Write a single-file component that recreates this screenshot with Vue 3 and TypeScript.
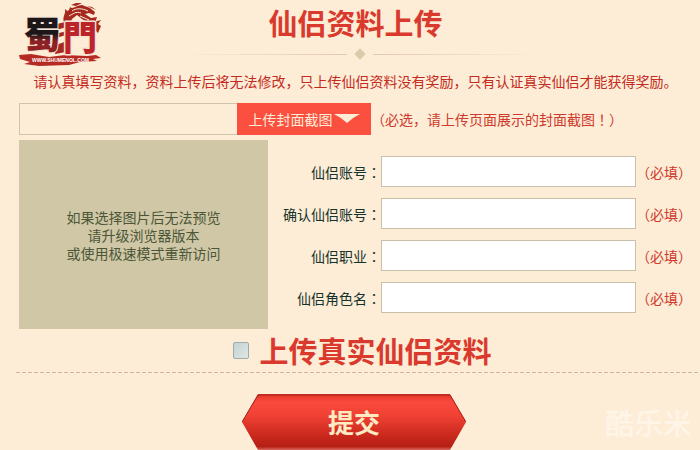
<script setup lang="ts">
import { reactive, ref } from 'vue'

interface Field {
  id: string
  label: string
}

const fields: Field[] = [
  { id: 'account', label: '仙侣账号' },
  { id: 'account-confirm', label: '确认仙侣账号' },
  { id: 'profession', label: '仙侣职业' },
  { id: 'role-name', label: '仙侣角色名' },
]

const values = reactive<Record<string, string>>({
  account: '',
  'account-confirm': '',
  profession: '',
  'role-name': '',
})

const previewLines: string[] = ['如果选择图片后无法预览', '请升级浏览器版本', '或使用极速模式重新访问']

const coverName = ref('')
const withRealInfo = ref(false)
</script>

<template>
  <main class="page">
    <header class="header">
      <svg class="logo" viewBox="0 0 84 66" role="img" aria-label="蜀門">
        <defs>
          <linearGradient id="logo-ink" x1="0" y1="0" x2="0" y2="1">
            <stop offset="0.52" stop-color="#1d1618" />
            <stop offset="0.66" stop-color="#8f2024" />
          </linearGradient>
        </defs>
        <g fill="#a5291f">
          <path d="M45 20 C43 15 47 12 46 7 C49 10 50 9 51 5 C54 8 57 3 63 3 L71 6 L76 10 L75 13 L70 11 L66 12 L72 16 L78 15 L76 21 L68 20 L63 17 L58 13 L53 17 L51 22 L46 26 Z" />
          <path d="M52 3 L57 1 L63 1 L57 4 Z M68 4 L73 5 L77 8 Z M75 20 L82 18 L79 22 L82 24 L79 31 L76 28 Z" />
          <path d="M34 23 L50 19 L48 25 L37 28 Z M36 32 L48 29 L47 33 L37 36 Z M37 43 L48 39 L47 50 L36 52 Z" />
        </g>
        <path d="M53 9 C57 6 63 6 69 9 M50 14 C54 12 57 9 62 11 M61 14 L70 18" fill="none" stroke="#fdedd7" stroke-width="1" />
        <path d="M0 53 L12 52 L30 55 L46 53 L68 54 L77 53 L82 56 L74 57 L78 59 L61 60 L50 63 L20 64 L5 62 L11 60 L1 57 Z" fill="#b52b24" />
        <text class="logo-glyph ink" x="5" y="47">蜀</text>
        <text class="logo-glyph red" x="44" y="48">門</text>
        <text class="logo-url" x="13" y="60">WWW.SHUMENOL.COM</text>
      </svg>
      <div class="heading">
        <h1 class="title">仙侣资料上传</h1>
        <div class="ornament"><span class="rule left"></span><span class="diamond"></span><span class="rule right"></span></div>
      </div>
    </header>

    <p class="notice">请认真填写资料，资料上传后将无法修改，只上传仙侣资料没有奖励，只有认证真实仙侣才能获得奖励。</p>

    <form @submit.prevent>
      <div class="upload">
        <input v-model="coverName" class="file-name" type="text" aria-label="封面截图" readonly />
        <button class="browse" type="button">
          上传封面截图
          <svg class="arrow" viewBox="0 0 26 10" aria-hidden="true"><path d="M0 0 H26 Q18 4 13 9 Q8 4 0 0 Z" fill="#fdedd7" /></svg>
        </button>
        <span class="required">（必选，请上传页面展示的封面截图<span class="mark">！</span>）</span>
      </div>

      <div class="details">
        <div class="preview">
          <span v-for="line in previewLines" :key="line">{{ line }}</span>
        </div>
        <div class="fields">
          <div v-for="field in fields" :key="field.id" class="field">
            <label :for="field.id">{{ field.label }}<span class="mark">：</span></label>
            <input :id="field.id" v-model="values[field.id]" type="text" required />
            <span class="required">（必填）</span>
          </div>
        </div>
      </div>

      <label class="real-info">
        <input v-model="withRealInfo" type="checkbox" />
        <span class="title">上传真实仙侣资料</span>
      </label>

      <footer class="footer">
        <button class="submit" type="submit">
          <svg class="submit-shape" viewBox="0 0 224 56" preserveAspectRatio="none" aria-hidden="true">
            <defs>
              <linearGradient id="submit-fill" x1="0" y1="0" x2="0" y2="1">
                <stop offset="0" stop-color="#df3529" />
                <stop offset="0.15" stop-color="#fb4a3d" />
                <stop offset="0.4" stop-color="#ef4034" />
                <stop offset="0.75" stop-color="#c9281d" />
                <stop offset="0.94" stop-color="#b51f14" />
                <stop offset="1" stop-color="#d8695c" />
              </linearGradient>
            </defs>
            <path d="M16 0 H208 L224 28 L208 56 H16 L0 28 Z" fill="url(#submit-fill)" />
            <path d="M0 28 L16 1 H208 L224 28" fill="none" stroke="#a52118" stroke-width="1" />
          </svg>
          <span class="submit-text">提交</span>
        </button>
        <span class="watermark">酷乐米</span>
      </footer>
    </form>
  </main>
</template>

<style>
body {
  margin: 0;
  background: #fdedd7;
}
</style>

<style scoped>
.page {
  box-sizing: border-box;
  padding: 0 8px 0 19px;
  overflow: hidden;
  background: #fdedd7;
  color: #16332b;
  font-family: "Noto Sans CJK SC", sans-serif;
  font-size: 14px;
  line-height: 18px;
}

input,
button {
  box-sizing: border-box;
  margin: 0;
  padding: 0;
  border: 0;
  border-radius: 0;
  font: inherit;
}

/* Punctuation centred in its cell */
.mark {
  font-family: "Noto Sans CJK TC", sans-serif;
}

.header {
  display: grid;
  grid-template-columns: 1fr 376px 1fr;
  align-items: start;
}

.logo {
  width: 84px;
  height: 66px;
  padding-top: 2px;
}

.logo-glyph {
  font-family: "Noto Sans CJK TC", sans-serif;
  font-weight: 900;
  paint-order: stroke;
  stroke-linejoin: round;
}

.logo-glyph.ink {
  font-size: 37px;
  fill: url(#logo-ink);
  stroke: #f3e2d6;
  stroke-width: 2px;
}

.logo-glyph.red {
  font-size: 34px;
  fill: #bd2429;
  stroke: #f3e2d6;
  stroke-width: 3px;
}

.logo-url {
  fill: #ffffff;
  font-family: "Liberation Sans", sans-serif;
  font-size: 5px;
  font-weight: 700;
}

.heading {
  padding-top: 3px;
}

.title {
  margin: 0;
  color: #d93a2d;
  font-size: 29px;
  font-weight: 700;
  line-height: 38px;
  text-align: center;
}

.ornament {
  display: flex;
  align-items: center;
  justify-content: center;
  gap: 9px;
  height: 26px;
  padding-left: 8px;
}

.rule {
  flex: 1;
  height: 1px;
}

.rule.left {
  background: linear-gradient(to left, #e3c8b0, #fdedd7);
}

.rule.right {
  background: linear-gradient(to right, #e3c8b0, #fdedd7);
}

.diamond {
  width: 8px;
  height: 8px;
  background: #d8cca9;
  transform: rotate(45deg);
}

.notice {
  margin: 0;
  padding: 4px 0 13px;
  color: #c42a20;
  text-align: center;
}

.upload {
  display: flex;
  align-items: center;
  height: 32px;
}

.file-name {
  width: 218px;
  height: 32px;
  border: 1px solid #cfc5ac;
  border-right: 0;
  background: transparent;
}

.browse {
  display: flex;
  align-items: center;
  justify-content: center;
  gap: 1px;
  width: 134px;
  height: 32px;
  background: #fb4f40;
  color: #fdedd7;
}

.arrow {
  width: 26px;
  height: 10px;
}

.required {
  color: #cf3a2c;
  white-space: nowrap;
}

.details {
  display: flex;
  align-items: stretch;
  padding-top: 5px;
}

.preview {
  display: flex;
  flex-direction: column;
  align-items: center;
  justify-content: center;
  width: 249px;
  min-height: 189px;
  background: #cfc7a6;
  color: #4c5637;
}

.fields {
  display: flex;
  flex: 1;
  flex-direction: column;
  gap: 11px;
  padding-top: 16px;
}

.field {
  display: flex;
  align-items: center;
}

.field label {
  width: 113px;
  text-align: right;
}

.field input {
  flex: 1;
  min-width: 0;
  height: 31px;
  padding: 0 6px;
  border: 1px solid #c9c0ab;
  background: #ffffff;
}

.real-info {
  display: flex;
  align-items: center;
  justify-content: center;
  gap: 10px;
  padding: 2px 0 3px 14px;
}

.real-info input {
  width: 16px;
  height: 17px;
  appearance: none;
  border: 1px solid #9fabab;
  border-radius: 2px;
  background: linear-gradient(135deg, #c3d3d6, #dfe7e3);
}

.real-info input:checked {
  background: #d93a2d;
}

.footer {
  display: grid;
  grid-template-columns: 1fr auto 1fr;
  align-items: center;
  margin: 0 -8px 0 -3px;
  padding: 22px 8px 0 0;
  background: repeating-linear-gradient(to right, #d3b49c 0 4px, transparent 4px 6px) top / 100% 1px no-repeat;
}

.submit {
  display: grid;
  grid-column: 2;
  place-items: center;
  width: 224px;
  height: 56px;
  background: transparent;
}

.submit-shape,
.submit-text {
  grid-area: 1 / 1;
}

.submit-shape {
  width: 100%;
  height: 56px;
}

.submit-text {
  color: #fdebc4;
  font-size: 26px;
  font-weight: 700;
  line-height: 36px;
}

.watermark {
  justify-self: end;
  color: #fff5e7;
  font-size: 29px;
  font-weight: 500;
  line-height: 40px;
}
</style>
